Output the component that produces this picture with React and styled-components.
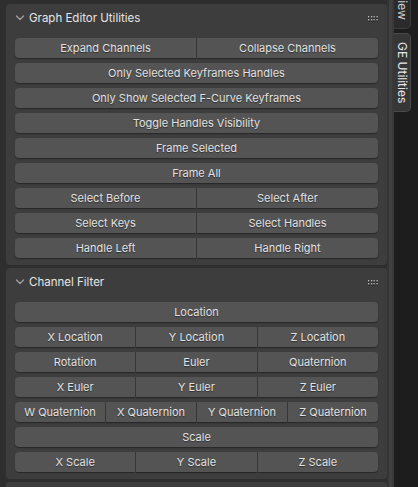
import React from 'react';
import styled, { createGlobalStyle } from 'styled-components';

const GlobalStyle = createGlobalStyle`
  html, body {
    margin: 0;
    padding: 0;
    background: #2e2e2e;
    overflow: hidden;
  }
  body {
    font-family: Inter, "Noto Sans", "DejaVu Sans", sans-serif;
  }
`;

const graphRows = [
  ['Expand Channels', 'Collapse Channels'],
  ['Only Selected Keyframes Handles'],
  ['Only Show Selected F-Curve Keyframes'],
  ['Toggle Handles Visibility'],
  ['Frame Selected'],
  ['Frame All'],
  ['Select Before', 'Select After'],
  ['Select Keys', 'Select Handles'],
  ['Handle Left', 'Handle Right'],
];

const filterRows = [
  ['Location'],
  ['X Location', 'Y Location', 'Z Location'],
  ['Rotation', 'Euler', 'Quaternion'],
  ['X Euler', 'Y Euler', 'Z Euler'],
  ['W Quaternion', 'X Quaternion', 'Y Quaternion', 'Z Quaternion'],
  ['Scale'],
  ['X Scale', 'Y Scale', 'Z Scale'],
];

const Chevron = () => (
  <svg width="10" height="10" viewBox="0 0 10 10">
    <polyline points="1.5,3 5,6.5 8.5,3" fill="none" stroke="#9a9a9a" strokeWidth="1.5" strokeLinecap="round" strokeLinejoin="round" />
  </svg>
);

const Grip = () => (
  <svg width="11" height="6" viewBox="0 0 11 6">
    {[0, 3].map((y) =>
      [0, 3, 5.5, 8.5].map((x) => (
        <g key={`${x}-${y}`}>
          <rect x={x} y={y + 1} width="1.2" height="1.5" fill="#1a1a1a" />
          <rect x={x} y={y} width="1.2" height="1.5" fill="#bdbdbd" />
        </g>
      ))
    )}
  </svg>
);

const Panel = ({ title, rows }) => (
  <PanelBox>
    <Header>
      <Chevron />
      <Title>{title}</Title>
      <GripWrap>
        <Grip />
      </GripWrap>
    </Header>
    <Body>
      {rows.map((row, i) => (
        <Row key={i}>
          {row.map((label, j) => (
            <Button key={label} $first={j === 0} $last={j === row.length - 1}>
              {label}
            </Button>
          ))}
        </Row>
      ))}
    </Body>
  </PanelBox>
);

const App = () => {
  return (
    <Screen>
      <GlobalStyle />
      <Region>
        <Panels>
          <Panel title="Graph Editor Utilities" rows={graphRows} />
          <Panel title="Channel Filter" rows={filterRows} />
          <PanelStub />
        </Panels>
        <Gutter>
          <GutterTrack />
        </Gutter>
      </Region>
      <TabBar>
        <Tab $offset>View</Tab>
        <Tab $active>GE Utilities</Tab>
      </TabBar>
    </Screen>
  );
};

export default App;

const Screen = styled.div`
  width: 418px;
  height: 487px;
  display: flex;
  overflow: hidden;
  background: #2e2e2e;
`;

const Region = styled.div`
  width: 394px;
  display: flex;
  padding: 4px 0 0 6px;
  box-sizing: border-box;
`;

const Panels = styled.div`
  width: 381px;
  display: flex;
  flex-direction: column;
  gap: 3px;
`;

const Gutter = styled.div`
  flex: 1;
  display: flex;
  padding-left: 2px;
  margin-top: -4px;
  background: #343434;
`;

const GutterTrack = styled.div`
  width: 3px;
  background: #404040;
  border-right: 2px solid #393939;
`;

const PanelBox = styled.div`
  background: #3d3d3d;
  border-radius: 4px;
  padding-bottom: 7px;
  flex-shrink: 0;
`;

const PanelStub = styled.div`
  background: #3d3d3d;
  border-radius: 4px 4px 0 0;
  height: 30px;
  flex-shrink: 0;
`;

const Header = styled.div`
  height: 28px;
  display: flex;
  align-items: center;
  padding: 0 8px 0 9px;
  gap: 4px;
`;

const Title = styled.div`
  flex: 1;
  color: #e6e6e6;
  font-size: 11.5px;
`;

const GripWrap = styled.div`
  display: flex;
  align-items: center;
  padding-top: 1px;
`;

const Body = styled.div`
  display: flex;
  flex-direction: column;
  gap: 5px;
  padding: 6px 9px 0 9px;
`;

const Row = styled.div`
  display: flex;
  gap: 1px;
`;

const Button = styled.div`
  flex: 1;
  height: 20px;
  display: flex;
  align-items: center;
  justify-content: center;
  background: #545454;
  color: #e2e2e2;
  font-size: 11px;
  white-space: nowrap;
  text-shadow: 0 1px 1px rgba(0, 0, 0, 0.45);
  box-shadow: 0 1px 1px rgba(0, 0, 0, 0.35);
  border-radius: ${(p) =>
    `${p.$first ? 4 : 0}px ${p.$last ? 4 : 0}px ${p.$last ? 4 : 0}px ${p.$first ? 4 : 0}px`};
`;

const TabBar = styled.div`
  flex: 1;
  background: #1d1d1d;
  display: flex;
  flex-direction: column;
  gap: 4px;
  overflow: hidden;
`;

const Tab = styled.div`
  width: 17px;
  box-sizing: border-box;
  writing-mode: vertical-rl;
  display: flex;
  align-items: center;
  padding: 8px 0;
  margin-top: ${(p) => (p.$offset ? '-17px' : '0')};
  background: ${(p) => (p.$active ? '#363636' : '#2b2b2b')};
  border: 1px solid ${(p) => (p.$active ? '#4a4a4a' : '#3c3c3c')};
  border-left: none;
  border-radius: 0 5px 5px 0;
  color: ${(p) => (p.$active ? '#e6e6e6' : '#cfcfcf')};
  font-size: 12px;
  line-height: 15px;
`;
